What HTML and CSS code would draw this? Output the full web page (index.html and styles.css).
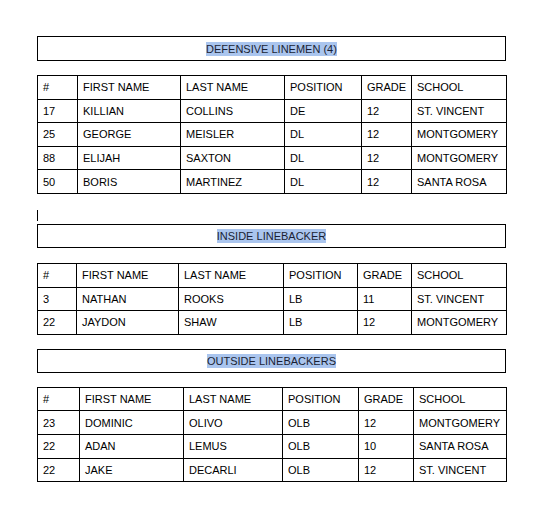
FILE: index.html
```html
<!DOCTYPE html>
<html>
<head>
<meta charset="utf-8">
<link rel="stylesheet" href="styles.css">
</head>
<body>
<div class="page">
  <div class="title t1"><span class="sel">DEFENSIVE LINEMEN (4)</span></div>
  <table class="roster r1">
    <colgroup><col class="c1"><col class="c2"><col class="c3"><col class="c4"><col class="c5"><col class="c6"></colgroup>
    <tr><td>#</td><td>FIRST NAME</td><td>LAST NAME</td><td>POSITION</td><td>GRADE</td><td>SCHOOL</td></tr>
    <tr><td>17</td><td>KILLIAN</td><td>COLLINS</td><td>DE</td><td>12</td><td>ST. VINCENT</td></tr>
    <tr><td>25</td><td>GEORGE</td><td>MEISLER</td><td>DL</td><td>12</td><td>MONTGOMERY</td></tr>
    <tr><td>88</td><td>ELIJAH</td><td>SAXTON</td><td>DL</td><td>12</td><td>MONTGOMERY</td></tr>
    <tr><td>50</td><td>BORIS</td><td>MARTINEZ</td><td>DL</td><td>12</td><td>SANTA ROSA</td></tr>
  </table>
  <div class="cursorline"><span class="cursor"></span></div>
  <div class="title t2"><span class="sel">INSIDE LINEBACKER</span></div>
  <table class="roster r2">
    <colgroup><col class="c1"><col class="c2"><col class="c3"><col class="c4"><col class="c5"><col class="c6"></colgroup>
    <tr><td>#</td><td>FIRST NAME</td><td>LAST NAME</td><td>POSITION</td><td>GRADE</td><td>SCHOOL</td></tr>
    <tr><td>3</td><td>NATHAN</td><td>ROOKS</td><td>LB</td><td>11</td><td>ST. VINCENT</td></tr>
    <tr><td>22</td><td>JAYDON</td><td>SHAW</td><td>LB</td><td>12</td><td>MONTGOMERY</td></tr>
  </table>
  <div class="title t3"><span class="sel">OUTSIDE LINEBACKERS</span></div>
  <table class="roster r3">
    <colgroup><col class="c1"><col class="c2"><col class="c3"><col class="c4"><col class="c5"><col class="c6"></colgroup>
    <tr><td>#</td><td>FIRST NAME</td><td>LAST NAME</td><td>POSITION</td><td>GRADE</td><td>SCHOOL</td></tr>
    <tr><td>23</td><td>DOMINIC</td><td>OLIVO</td><td>OLB</td><td>12</td><td>MONTGOMERY</td></tr>
    <tr><td>22</td><td>ADAN</td><td>LEMUS</td><td>OLB</td><td>10</td><td>SANTA ROSA</td></tr>
    <tr><td>22</td><td>JAKE</td><td>DECARLI</td><td>OLB</td><td>12</td><td>ST. VINCENT</td></tr>
  </table>
</div>
</body>
</html>
```
FILE: styles.css
```css
html, body {
  margin: 0;
  padding: 0;
  background: #ffffff;
}
body {
  font-family: "Liberation Sans", Arial, sans-serif;
  font-size: 11px;
  color: #000;
}
.page {
  width: 469px;
  margin-left: 37px;
  padding-top: 36px;
  display: flex;
  flex-direction: column;
}
.title {
  box-sizing: border-box;
  border: 1px solid #000;
  display: flex;
  align-items: center;
  justify-content: center;
  height: 25px;
}
.t2 { height: 24px; }
.t3 { height: 24px; margin-top: 15px; }
.sel {
  background: #aac5ee;
  color: #1a1f33;
  line-height: 14px;
}
.roster {
  border-collapse: collapse;
  table-layout: fixed;
  width: 469px;
}
.roster td {
  border: 1px solid #000;
  padding: 0 0 0 5px;
  height: 22.6px;
  white-space: nowrap;
  overflow: hidden;
  vertical-align: middle;
}
.r1 { margin-top: 14px; }
.r2 { margin-top: 15px; }
.r3 { margin-top: 14px; }
.r1 .c1 { width: 40px; }
.r1 .c2 { width: 103px; }
.r1 .c3 { width: 104px; }
.r1 .c4 { width: 77px; }
.r1 .c5 { width: 50px; }
.r1 .c6 { width: 95px; }
.r2 .c1 { width: 39px; }
.r2 .c2 { width: 102px; }
.r2 .c3 { width: 105px; }
.r2 .c4 { width: 74px; }
.r2 .c5 { width: 54px; }
.r2 .c6 { width: 95px; }
.r3 .c1 { width: 42px; }
.r3 .c2 { width: 104px; }
.r3 .c3 { width: 99px; }
.r3 .c4 { width: 76px; }
.r3 .c5 { width: 55px; }
.r3 .c6 { width: 93px; }
.r2 + .title { margin-top: 14px; }
.cursorline {
  box-sizing: border-box;
  height: 30px;
  padding-bottom: 3px;
  display: flex;
  align-items: flex-end;
}
.cursor {
  display: block;
  width: 1px;
  height: 11px;
  background: #000;
}
```
